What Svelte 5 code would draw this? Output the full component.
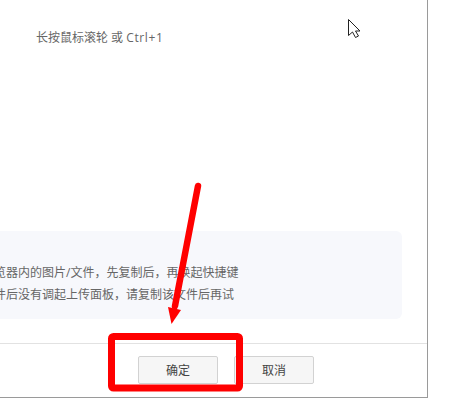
<script>
  const tips = [
    '若需上传浏览器内的图片/文件，先复制后，再唤起快捷键',
    '若选中某文件后没有调起上传面板，请复制该文件后再试'
  ];
</script>

<div class="page">
  <div class="dialog">
    <div class="body">
      <p class="shortcut">长按鼠标滚轮 或 <span class="keys">Ctrl+1</span></p>
      <div class="tips">
        {#each tips as tip}
          <div class="tip">{tip}</div>
        {/each}
      </div>
    </div>
    <div class="footer">
      <button class="btn">确定</button>
      <button class="btn">取消</button>
    </div>
  </div>

  <!-- annotation drawn over the screenshot -->
  <svg class="marks" viewBox="0 0 451 401" width="451" height="401">
    <rect x="111.5" y="336.5" width="128" height="51.5" rx="2" fill="none" stroke="#ff0000" stroke-width="7" />
    <path d="M198 186 L175 306" fill="none" stroke="#ff0000" stroke-width="6.5" stroke-linecap="round" />
    <path d="M168 307 L181 310 L171.5 324 Z" fill="#ff0000" />
    <path d="M348.5 19.5 V35.5 L352.5 32 L355.5 37.5 L358.5 36 L355.5 31 H360 Z" fill="#fff" stroke="#222" stroke-width="1" stroke-linejoin="miter" />
  </svg>
</div>

<style>
  :global(body) {
    margin: 0;
    background: #fff;
  }

  .page {
    position: relative;
    width: 451px;
    height: 401px;
    overflow: hidden;
    background: #fff;
    font-family: "Open Sans", "Noto Sans CJK SC", sans-serif;
  }

  .dialog {
    box-sizing: border-box;
    width: 428px;
    height: 398px;
    display: flex;
    flex-direction: column;
    border-right: 1px solid #9a9a9a;
    border-bottom: 1px solid #9a9a9a;
  }

  .body {
    flex: 1;
    display: flex;
    flex-direction: column;
    justify-content: space-between;
    padding: 30px 25px 24px 0;
  }

  .shortcut {
    margin: 0 0 0 36px;
    font-size: 12px;
    line-height: 16px;
    color: #666;
  }

  .keys {
    letter-spacing: 0.6px;
  }

  .tips {
    box-sizing: border-box;
    height: 88px;
    margin-left: -66px;
    padding: 31px 0 0;
    background: #f7f8fc;
    border-radius: 6px;
  }

  .tip {
    font-size: 12px;
    line-height: 22px;
    color: #666;
    white-space: nowrap;
  }

  .footer {
    height: 54px;
    box-sizing: border-box;
    display: flex;
    gap: 16px;
    padding: 12px 0 0 138px;
    border-top: 1px solid #e2e2e2;
  }

  .btn {
    width: 80px;
    height: 28px;
    padding: 0;
    font-family: inherit;
    font-size: 12px;
    color: #444;
    background: #f6f6f6;
    border: 1px solid #d2d2d2;
    border-radius: 2px;
  }

  .marks {
    position: absolute;
    left: 0;
    top: 0;
    pointer-events: none;
  }
</style>
